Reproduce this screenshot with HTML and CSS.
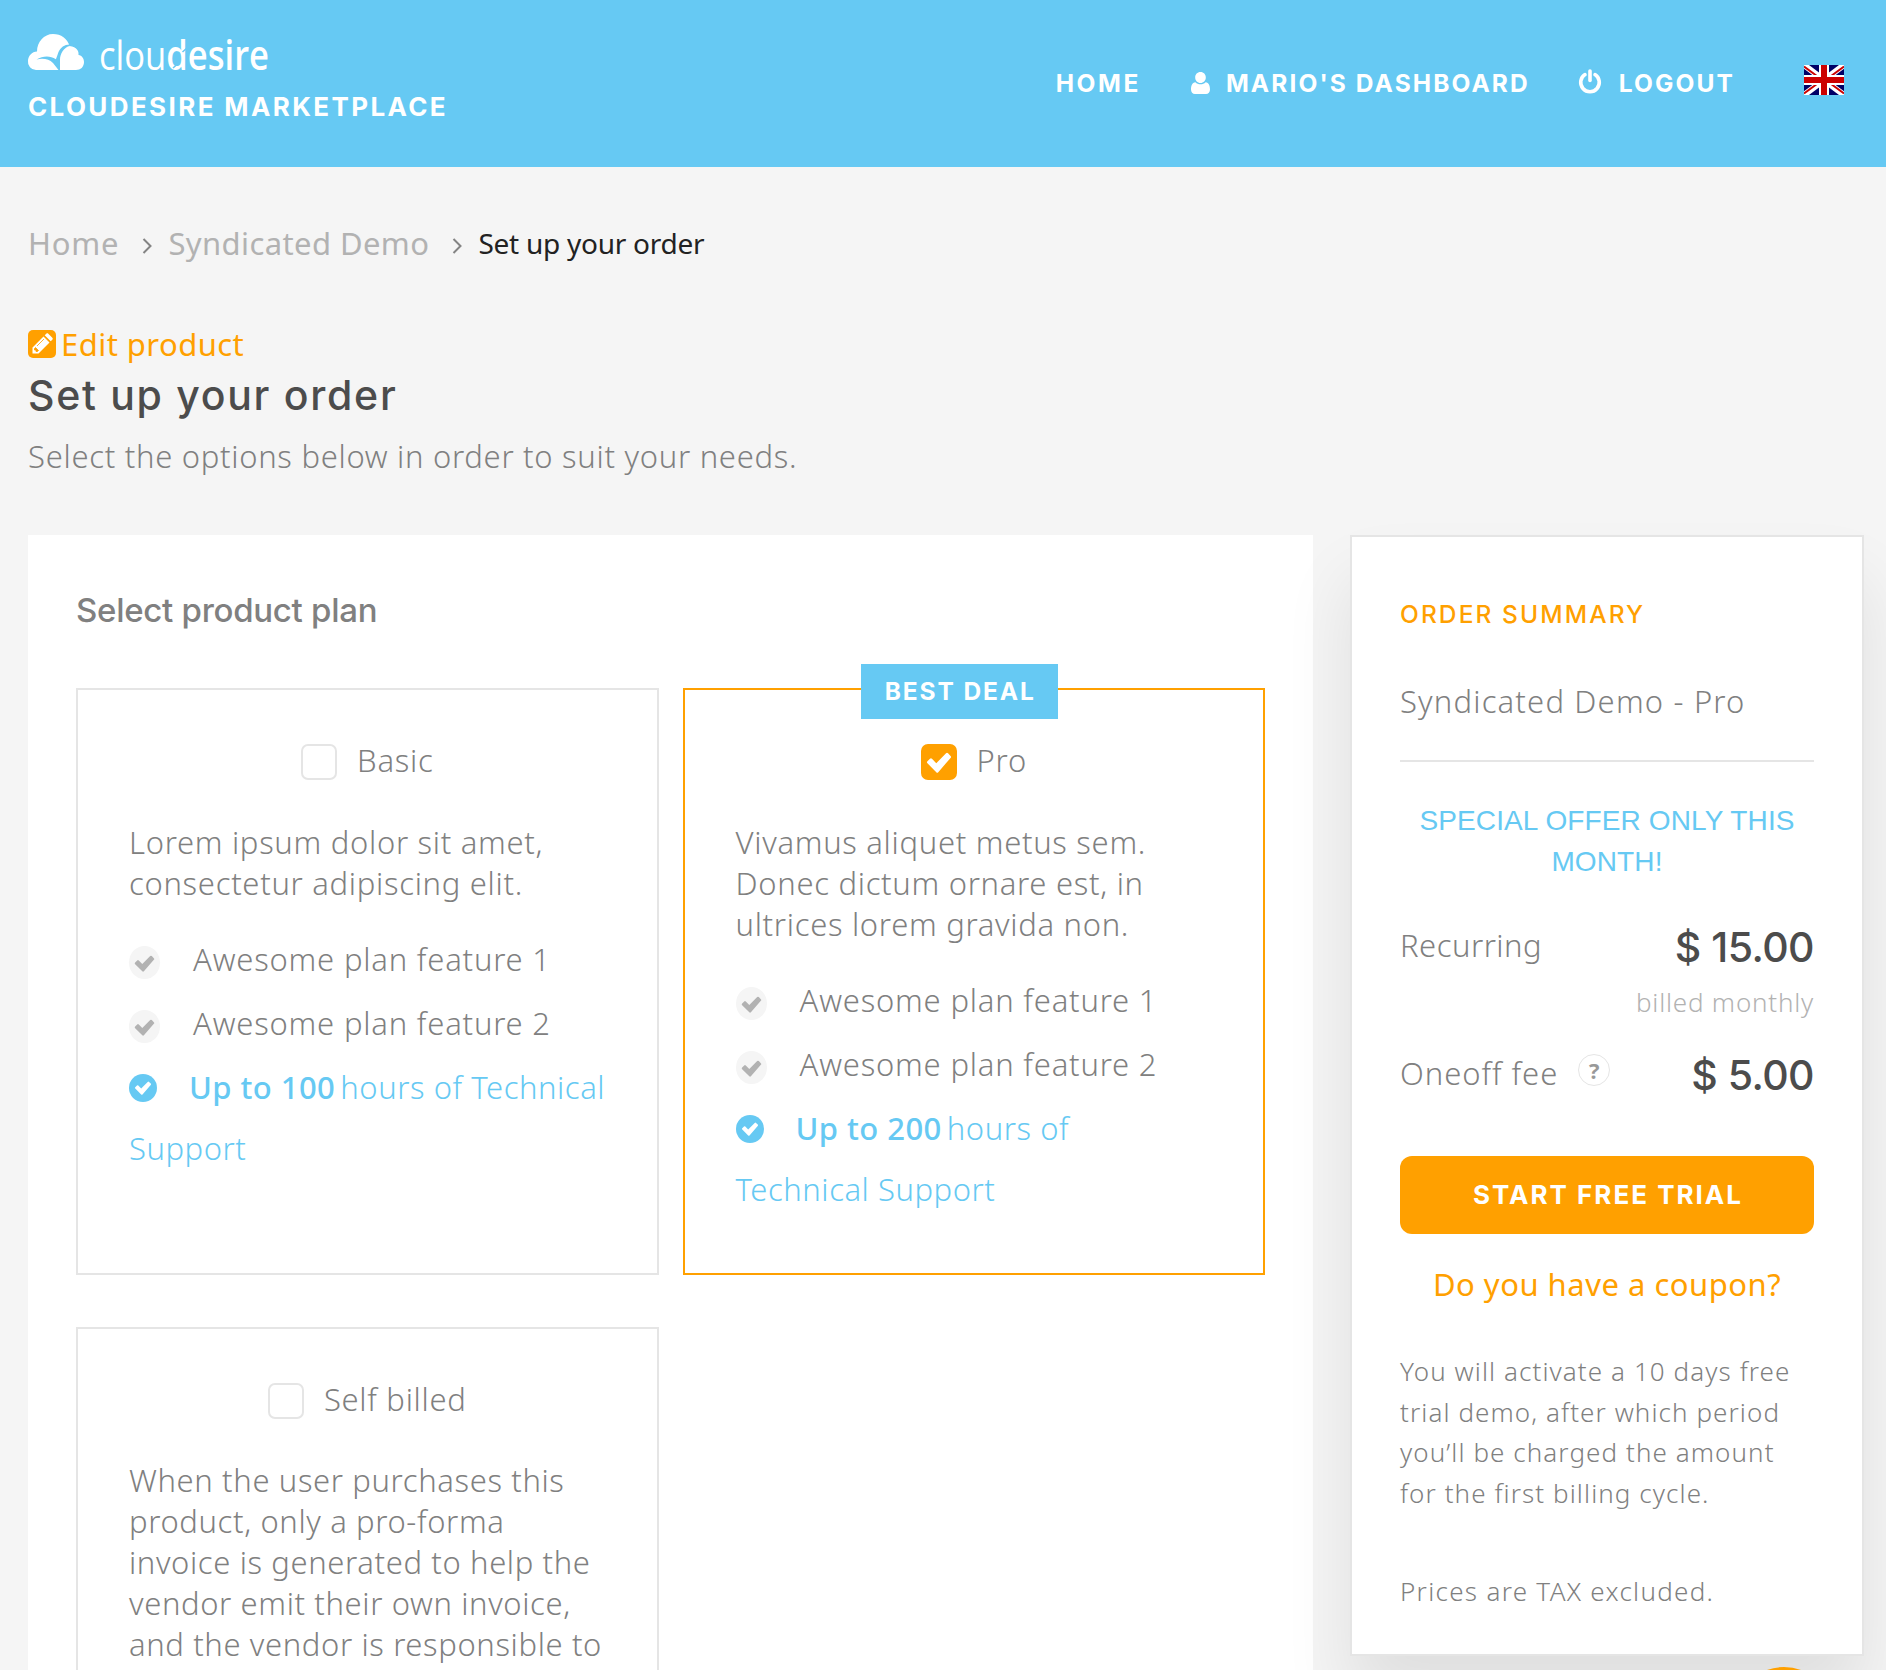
FILE: index.html
```
<!DOCTYPE html>
<html lang="en">
<head>
<meta charset="utf-8">
<title>Set up your order - Cloudesire Marketplace</title>
<link rel="stylesheet" href="styles.css">
</head>
<body>
<svg class="sprite" aria-hidden="true">
  <symbol id="tick" viewBox="0 0 24 20"><path d="M9.400 19.200 1 10.800a1.300 1.300 0 0 1 0-1.900l2.400-2.400a1.300 1.300 0 0 1 1.900 0l4.100 4.100L18.700 1.300a1.300 1.300 0 0 1 1.900 0L23 3.700a1.300 1.300 0 0 1 0 1.900L11.300 19.200a1.300 1.300 0 0 1-1.900 0z"/></symbol>
</svg>

<header class="header">
  <div class="brand">
    <svg class="logo" viewBox="0 0 242 36" role="img" aria-label="cloudesire">
      <path fill="#fff" d="M8 36a8 8 0 0 1-8-9c0-5 4-9.500 9-9.500C9 8 16 0 25 0c8 0 14.500 4.500 16.500 12C49 13 51 17 50.500 21c3.500.5 5.500 3.500 5.500 7 0 5-3.500 8-8 8z"/>
      <path fill="#66c9f3" d="M41.500 10.500c-5 0-9 3-11 7.500-1 2.500-1.600 5-2.600 7.200-6-3.800-13-3.400-19.400.3 7-1.500 12.500-.3 16.500 3.500l5.500 7H32V26c0-6.500 4-13 10-14z"/>
      <text class="logo-text" x="71" y="35.500" textLength="170" lengthAdjust="spacingAndGlyphs">clou<tspan class="logo-bold">desire</tspan></text>
      <path d="m145 34 4-3.500M154.500 18l5-4.500" stroke="#66c9f3" stroke-width="1.500"/>
    </svg>
    <div class="brand-name">CLOUDESIRE MARKETPLACE</div>
  </div>
  <nav class="nav">
    <a class="nav-home">HOME</a>
    <svg class="icon-user" viewBox="0 0 19 22"><path fill="#fff" d="M9.500 0c3.200 0 5.300 2.400 5.300 5.500S12.500 11 9.500 11 4.200 8.600 4.200 5.500 6.300 0 9.500 0zM4.400 10.200C5.800 11.500 7.500 12.300 9.500 12.300s3.700-.8 5.100-2.100C18 10.700 19 14 19 17.500c0 2.700-1.600 4.500-4 4.500H4c-2.400 0-4-1.800-4-4.500C0 14 1 10.700 4.400 10.200z"/></svg>
    <a>MARIO'S DASHBOARD</a>
    <svg class="icon-power" viewBox="0 0 24 25"><g fill="none" stroke="#fff" stroke-width="3.600" stroke-linecap="round"><path d="M7 5.600a9.300 9.300 0 1 0 10 0"/><path d="M12 2v9.500"/></g></svg>
    <a>LOGOUT</a>
    <svg class="flag" viewBox="0 0 40 30"><path fill="#006" d="M0 0h40v30H0z"/><path d="M0 0 40 30M40 0 0 30" stroke="#fff" stroke-width="6"/><path d="M0 1.500 17 14M40 1.500 23 14M0 28.500 17 16M40 28.500 23 16" stroke="#c00" stroke-width="2"/><path d="M20 0v30M0 15h40" stroke="#fff" stroke-width="10"/><path d="M20 0v30M0 15h40" stroke="#c00" stroke-width="6"/></svg>
  </nav>
</header>

<main class="page">
  <nav class="crumbs">
    <a class="crumb-home">Home</a>
    <svg class="chevron" viewBox="0 0 10 16"><path d="M1.500 1 8.500 8l-7 7"/></svg>
    <a class="crumb-product">Syndicated Demo</a>
    <svg class="chevron" viewBox="0 0 10 16"><path d="M1.500 1 8.500 8l-7 7"/></svg>
    <span class="crumb-current">Set up your order</span>
  </nav>

  <a class="edit"><svg class="edit-icon" viewBox="0 0 28 28"><rect width="28" height="28" rx="5" fill="#ffa000"/><path fill="#fff" d="M4.500 23.500v-6L15.500 6.500l6 6-11 11zM16.700 5.300l1.600-1.600c.6-.6 1.400-.6 2 0l4 4c.6.6.6 1.400 0 2l-1.600 1.600z"/><path d="M6.500 18.500v1.500H8v1.500h1.500l1-1-3-3zM9 16l7-7" fill="#ffa000" stroke="#ffa000" stroke-width=".8"/></svg><span>Edit product</span></a>
  <h1 class="title">Set up your order</h1>
  <p class="subtitle">Select the options below in order to suit your needs.</p>

  <div class="columns">
    <section class="panel">
      <h2 class="panel-title">Select product plan</h2>
      <div class="plans">
        <article class="plan">
          <div class="plan-head"><span class="check"></span><span>Basic</span></div>
          <p class="plan-text">Lorem ipsum dolor sit amet,<br>consectetur adipiscing elit.</p>
          <ul class="features">
            <li><span class="dot"><svg><use href="#tick"/></svg></span><span>Awesome plan feature 1</span></li>
            <li><span class="dot"><svg><use href="#tick"/></svg></span><span>Awesome plan feature 2</span></li>
          </ul>
          <p class="support"><span class="badge"><svg><use href="#tick"/></svg></span><b>Up to 100</b>hours of Technical<br>Support</p>
        </article>
        <article class="plan plan-selected">
          <span class="ribbon">BEST DEAL</span>
          <div class="plan-head"><span class="check checked"><svg><use href="#tick"/></svg></span><span>Pro</span></div>
          <p class="plan-text">Vivamus aliquet metus sem.<br>Donec dictum ornare est, in<br>ultrices lorem gravida non.</p>
          <ul class="features">
            <li><span class="dot"><svg><use href="#tick"/></svg></span><span>Awesome plan feature 1</span></li>
            <li><span class="dot"><svg><use href="#tick"/></svg></span><span>Awesome plan feature 2</span></li>
          </ul>
          <p class="support"><span class="badge"><svg><use href="#tick"/></svg></span><b>Up to 200</b>hours of<br>Technical Support</p>
        </article>
        <article class="plan">
          <div class="plan-head"><span class="check"></span><span>Self billed</span></div>
          <p class="plan-text plan-text-long">When the user purchases this<br>product, only a pro-forma<br>invoice is generated to help the<br>vendor emit their own invoice,<br>and the vendor is responsible to</p>
        </article>
      </div>
    </section>

    <aside class="summary">
      <h3 class="summary-title">ORDER SUMMARY</h3>
      <div class="summary-product">Syndicated Demo - Pro</div>
      <p class="offer">SPECIAL OFFER ONLY THIS<br>MONTH!</p>
      <div class="fee"><span class="fee-label">Recurring</span><span class="price">$ 15.00</span></div>
      <div class="billed">billed monthly</div>
      <div class="fee fee-oneoff"><span class="fee-label">Oneoff fee</span><span class="help">?</span><span class="price">$ 5.00</span></div>
      <a class="button">START FREE TRIAL</a>
      <a class="coupon">Do you have a coupon?</a>
      <p class="note">You will activate a 10 days free<br>trial demo, after which period<br>you’ll be charged the amount<br>for the first billing cycle.</p>
      <p class="note note-tax">Prices are TAX excluded.</p>
    </aside>
  </div>
</main>
<div class="chat"><svg viewBox="0 0 100 3"><circle cx="50" cy="50" r="50" fill="#ffa000"/></svg></div>
</body>
</html>
```
FILE: styles.css
```
* { box-sizing: border-box; margin: 0; padding: 0; }

html, body { height: 1670px; overflow: hidden; }

body {
  position: relative;
  background: #f5f5f5;
  color: #808080;
  font: 300 31px/41px "Noto Sans", "Open Sans", sans-serif;
}

svg { display: block; flex: none; }
.sprite { position: absolute; width: 0; height: 0; }

/* Header */
.header {
  display: flex;
  justify-content: space-between;
  align-items: flex-start;
  height: 167px;
  padding: 34px 42px 0 28px;
  background: #66c9f3;
  color: #fff;
  font-family: Inter, sans-serif;
  font-weight: 700;
}
.logo { width: 242px; height: 36px; overflow: visible; }
.logo-text { fill: #fff; font: 400 41px "Open Sans", sans-serif; }
.logo-bold { font-weight: 600; }
.brand-name { margin-top: 20px; font-size: 26px; line-height: 34px; letter-spacing: 2.38px; }
.nav { display: flex; align-items: flex-start; margin-top: 31px; font-size: 24.5px; line-height: 36px; letter-spacing: 2.1px; }
.nav-home { letter-spacing: 2.6px; }
.icon-user { width: 19px; height: 22px; margin: 7px 16px 0 50px; }
.icon-power { width: 24px; height: 25px; margin: 4px 17px 0 48px; }
.flag { width: 40px; height: 30px; margin-left: 69px; }

/* Heading area */
.page { padding: 56px 22px 0 28px; }
.crumbs { display: flex; font-weight: 400; color: #b2b2b2; }
.crumb-home { letter-spacing: .8px; }
.crumb-product { letter-spacing: .4px; }
.chevron { width: 10px; height: 16px; margin: 15px 16px 0 23px; fill: none; stroke: #848484; stroke-width: 2; }
.crumb-current { font-size: 28px; letter-spacing: -.26px; color: #222; }
.edit { display: flex; margin-top: 60px; color: #ffa000; font-weight: 400; letter-spacing: .45px; }
.edit-icon { width: 28px; height: 28px; margin: 6px 5px 0 0; }
.title { margin-top: 5px; font: 500 41px/50px Inter, sans-serif; letter-spacing: 1.7px; color: #4c4c4c; }
.subtitle { margin-top: 16px; letter-spacing: .71px; }

.columns { display: flex; align-items: flex-start; gap: 37px; margin-top: 58px; }

/* Plans */
.panel { width: 1285px; height: 1135px; padding: 55px 48px 0; overflow: hidden; background: #fff; }
.panel-title { font: 500 33px/41px Inter, sans-serif; letter-spacing: -.28px; }
.plans { display: grid; grid-template-columns: 1fr 1fr; gap: 52px 24px; margin-top: 57px; }
.plan { position: relative; height: 587px; padding: 50px 0 0 51px; border: 2px solid #e5e5e5; }
.plan-selected { border-color: #ffa000; }
.plan-head { display: flex; justify-content: center; padding-right: 51px; letter-spacing: .72px; }
.check { width: 36px; height: 36px; margin: 4px 20px 0 0; border: 2px solid #e5e5e5; border-radius: 7px; }
.checked { padding: 6px 3px; border-color: #ffa000; background: #ffa000; }
.checked svg { width: 26px; height: 21px; fill: #fff; }
.plan-text { margin-top: 41px; letter-spacing: .7px; white-space: nowrap; }
.plan-text-long { margin-top: 40px; letter-spacing: .62px; }
.features { list-style: none; margin-top: 35px; letter-spacing: .8px; }
.features li { display: flex; margin-bottom: 23px; }
.dot { width: 31px; height: 33px; margin: 7px 33px 0 0; padding: 9px 5px; border-radius: 50%; background: #f5f5f5; }
.dot svg { width: 21px; height: 17px; fill: #b2b2b2; }
.support { margin-top: -10px; line-height: 61px; letter-spacing: .55px; color: #66c9f3; white-space: nowrap; }
.support b { margin-right: 5px; font-weight: 500; letter-spacing: .45px; }
.badge { display: inline-block; width: 28px; height: 28px; margin-right: 32px; padding: 7px 5px; border-radius: 50%; background: #66c9f3; line-height: 0; vertical-align: -3px; }
.badge svg { width: 18px; height: 14px; fill: #fff; }
.ribbon {
  position: absolute;
  top: -26px;
  left: 50%;
  width: 197px;
  margin-left: -113px;
  background: #66c9f3;
  color: #fff;
  font: 700 24.5px/55px Inter, sans-serif;
  letter-spacing: 1.9px;
  text-indent: 2px;
  text-align: center;
}

/* Order summary */
.summary { position: relative; width: 514px; height: 1121px; padding: 60px 48px 0; border: 2px solid #e5e5e5; background: #fff; box-shadow: 0 45px 65px rgba(0, 0, 0, .09); }
.summary-title { font: 500 24.5px/34px Inter, sans-serif; letter-spacing: 2.1px; color: #ffa000; }
.summary-product { margin-top: 50px; padding-bottom: 38px; border-bottom: 2px solid #e5e5e5; letter-spacing: 1.18px; }
.offer { margin-top: 38px; font: 400 28px/41px "Liberation Sans", Arial, sans-serif; letter-spacing: .12px; color: #66c9f3; text-align: center; }
.fee { display: flex; margin-top: 40px; }
.fee-label { padding-top: 3px; letter-spacing: .5px; }
.price { margin-left: auto; font: 500 41px/50px Inter, sans-serif; letter-spacing: -.55px; color: #4c4c4c; }
.billed { margin-top: 13px; font-size: 26px; line-height: 34px; letter-spacing: .78px; color: #b2b2b2; text-align: right; }
.fee-oneoff { margin-top: 31px; }
.fee-oneoff .fee-label { letter-spacing: .95px; }
.help { width: 32px; height: 32px; margin: 4px 0 0 20px; border: 1px solid #e5e5e5; border-radius: 50%; font: 700 22px/30px "Open Sans", sans-serif; color: #999; text-align: center; }
.button { display: block; margin-top: 56px; border-radius: 12px; background: #ffa000; color: #fff; font: 700 26px/78px Inter, sans-serif; letter-spacing: 2px; text-indent: 2px; text-align: center; }
.coupon { display: block; margin-top: 30px; color: #ffa000; font-weight: 400; letter-spacing: .5px; text-align: center; }
.note { margin-top: 46px; font-size: 26px; line-height: 40.6px; letter-spacing: 1.08px; white-space: nowrap; }
.note-tax { margin-top: 58px; letter-spacing: 1.3px; }

/* Top edge of the chat launcher */
.chat { position: absolute; top: 1667px; left: 1734px; width: 100px; height: 3px; overflow: hidden; }
.chat svg { width: 100px; height: 3px; }
```
